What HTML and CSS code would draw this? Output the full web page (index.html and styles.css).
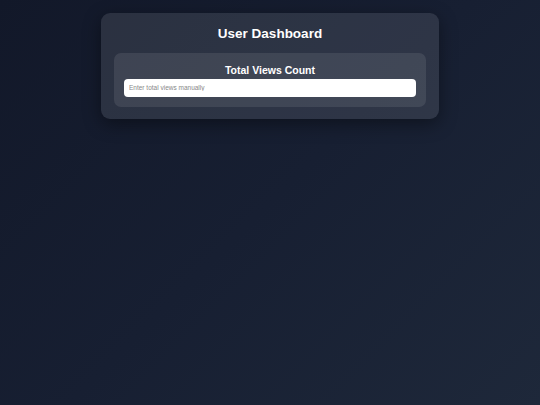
FILE: index.html
```html
<!DOCTYPE html>
<html lang="en">
<head>
  <meta charset="UTF-8" />
  <meta name="viewport" content="width=device-width, initial-scale=1.0"/>
  <title>User Dashboard</title>
  <link rel="stylesheet" href="styles.css">
</head>
<body>
  <div class="container">
    <h2>User Dashboard</h2>

    <div class="section">
      <label for="views">Total Views Count</label>
      <input type="text" id="views" placeholder="Enter total views manually" />
    </div>
  </div>
</body>
</html>
```

FILE: styles.css
```css
html, body {
  height: 100%;
}
body {
  font-family: "Liberation Sans", Arial, sans-serif;
  margin: 0;
  padding-top: 13px;
  box-sizing: border-box;
  background: linear-gradient(135deg, #121829 0%, #171f32 50%, #1e283a 100%);
  color: white;
}
.container {
  width: 338px;
  margin: 0 auto;
  padding: 13px 13px 12.5px;
  box-sizing: border-box;
  background: rgba(255, 255, 255, 0.1);
  border-radius: 9px;
  box-shadow: 0 5px 18px rgba(0, 0, 0, 0.4);
}
h2 {
  margin: 0 0 12px;
  font-size: 13.5px;
  text-align: center;
}
.section {
  padding: 11px 10px 10px;
  background: rgba(255, 255, 255, 0.09);
  border-radius: 7px;
}
label {
  display: block;
  font-size: 10.5px;
  font-weight: bold;
  text-align: center;
  margin-bottom: 3px;
}
input {
  display: block;
  width: 100%;
  height: 17.5px;
  padding: 0 5px;
  box-sizing: border-box;
  border: none;
  border-radius: 4px;
  font-family: "Liberation Sans", Arial, sans-serif;
  font-size: 6.5px;
  background: white;
}
input::placeholder {
  color: #888;
}
```
